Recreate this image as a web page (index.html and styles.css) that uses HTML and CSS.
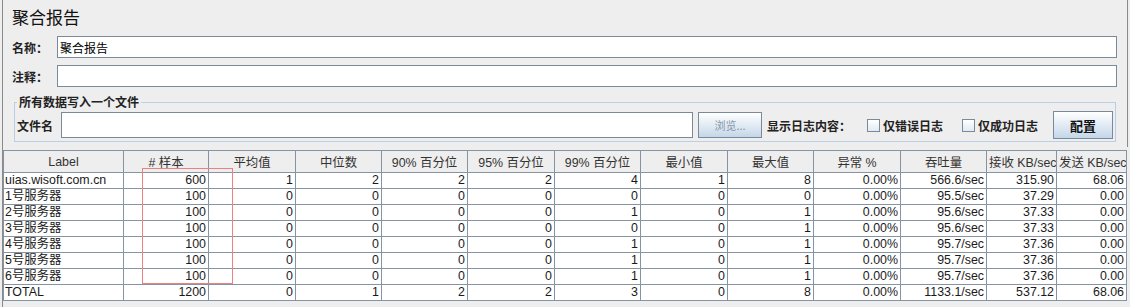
FILE: index.html
```html
<!DOCTYPE html>
<html lang="zh-CN">

<head>
    <meta charset="UTF-8">
    <title>聚合报告</title>
    <link rel="stylesheet" href="styles.css">
</head>

<body>
    <div class="frame">
        <div class="top">
            <h1 class="title">聚合报告</h1>
            <div class="field"><label>名称：</label><input type="text" value="聚合报告"></div>
            <div class="field"><label>注释：</label><input type="text"></div>
            <fieldset class="filebox">
                <legend>所有数据写入一个文件</legend>
                <div class="filerow">
                    <label class="fname">文件名</label>
                    <input type="text" class="finput">
                    <button type="button" class="btn browse">浏览...</button>
                    <span class="loglabel">显示日志内容：</span>
                    <span class="check"></span><span class="chtext">仅错误日志</span>
                    <span class="check check2"></span><span class="chtext">仅成功日志</span>
                    <button type="button" class="btn conf">配置</button>
                </div>
            </fieldset>
        </div>
        <div class="grid">
            <table cellspacing="0">
                <colgroup>
                    <col style="width:120px"><col style="width:85px"><col style="width:87px"><col style="width:86px">
                    <col style="width:86px"><col style="width:87px"><col style="width:86px"><col style="width:87px">
                    <col style="width:86px"><col style="width:87px"><col style="width:86px"><col style="width:70px">
                    <col style="width:70px">
                </colgroup>
                <thead>
                    <tr>
                        <th>Label</th>
                        <th># 样本</th>
                        <th>平均值</th>
                        <th>中位数</th>
                        <th>90% 百分位</th>
                        <th>95% 百分位</th>
                        <th>99% 百分位</th>
                        <th>最小值</th>
                        <th>最大值</th>
                        <th>异常 %</th>
                        <th>吞吐量</th>
                        <th>接收 KB/sec</th>
                        <th>发送 KB/sec</th>
                    </tr>
                </thead>
                <tbody></tbody>
            </table>
            <div class="mark"></div>
        </div>
    </div>
    <script>
        // 表格数据
        var rows = [
            ["uias.wisoft.com.cn", 600, 1, 2, 2, 2, 4, 1, 8, "0.00%", "566.6/sec", "315.90", "68.06"],
            ["1号服务器", 100, 0, 0, 0, 0, 0, 0, 0, "0.00%", "95.5/sec", "37.29", "0.00"],
            ["2号服务器", 100, 0, 0, 0, 0, 1, 0, 1, "0.00%", "95.6/sec", "37.33", "0.00"],
            ["3号服务器", 100, 0, 0, 0, 0, 0, 0, 1, "0.00%", "95.6/sec", "37.33", "0.00"],
            ["4号服务器", 100, 0, 0, 0, 0, 1, 0, 1, "0.00%", "95.7/sec", "37.36", "0.00"],
            ["5号服务器", 100, 0, 0, 0, 0, 1, 0, 1, "0.00%", "95.7/sec", "37.36", "0.00"],
            ["6号服务器", 100, 0, 0, 0, 0, 1, 0, 1, "0.00%", "95.7/sec", "37.36", "0.00"],
            ["TOTAL", 1200, 0, 1, 2, 2, 3, 0, 8, "0.00%", "1133.1/sec", "537.12", "68.06"]
        ];
        var tbody = document.querySelector("tbody");
        for (let i = 0; i < rows.length; i++) {
            var html = "<tr>";
            for (let j = 0; j < rows[i].length; j++) {
                html += `<td>${rows[i][j]}</td>`;
            }
            tbody.innerHTML += html + "</tr>";
        }
    </script>
</body>

</html>
```

FILE: styles.css
```css
body{
    margin: 0;
    background-color: #eeeeee;
    font-family: "Liberation Sans", "Noto Sans CJK SC", sans-serif;
    font-size: 12px;
    color: #222;
}
.frame{
    margin-left: 2px;
    width: 1125px;
    height: 307px;
    border-left: 1px solid #8a8a8a;
}
.top{
    padding: 0 10px 5px 9px;
    border-right: 1px solid #8a8a8a;
}
.title{
    margin: 0;
    padding-top: 5px;
    height: 24px;
    line-height: 24px;
    font-size: 17px;
    font-weight: normal;
    font-family: "Noto Sans CJK SC", sans-serif;
    color: #111;
}
.field{
    display: flex;
    align-items: center;
    margin-top: 7px;
}
.field label{
    width: 45px;
    font-weight: bold;
    font-family: "Noto Sans CJK SC", sans-serif;
    color: #222;
}
input{
    outline: none;
    box-sizing: border-box;
    border: 1px solid #7a8a99;
    background: #fff;
    margin: 0;
    padding: 0 2px;
    font-family: "Noto Sans CJK SC", sans-serif;
    font-size: 12px;
    color: #000;
}
.field input{
    flex: 1;
    height: 22px;
}
.filebox{
    margin: 8px 1px 0 2px;
    padding: 0 0 2px 2px;
    border: 1px solid #b8cfe5;
}
.filebox legend{
    padding: 0 2px;
    line-height: 14px;
    font-weight: bold;
    font-family: "Noto Sans CJK SC", sans-serif;
}
.filerow{
    display: flex;
    align-items: center;
    height: 28px;
    margin-top: 2px;
}
.fname{
    width: 44px;
    font-weight: bold;
    font-family: "Noto Sans CJK SC", sans-serif;
}
.finput{
    width: 632px;
    height: 26px;
}
.btn{
    box-sizing: border-box;
    border: 1px solid #7a8a99;
    background: linear-gradient(#ffffff, #dce7f2 60%, #c4d6e8);
    padding: 0;
    font-family: "Noto Sans CJK SC", sans-serif;
}
.browse{
    margin-left: 5px;
    width: 64px;
    height: 26px;
    font-size: 11px;
    color: #8796a6;
}
.loglabel{
    margin-left: 5px;
    width: 100px;
    font-weight: bold;
    font-family: "Noto Sans CJK SC", sans-serif;
}
.check{
    box-sizing: border-box;
    width: 13px;
    height: 13px;
    border: 1px solid #7a8a99;
    background: linear-gradient(#ffffff, #e2eaf2);
}
.check2{
    margin-left: 19px;
}
.chtext{
    margin-left: 3px;
    font-weight: bold;
    font-family: "Noto Sans CJK SC", sans-serif;
}
.conf{
    margin-left: auto;
    margin-right: 2px;
    width: 60px;
    height: 28px;
    font-size: 13px;
    font-weight: bold;
    color: #111;
}
.grid{
    position: relative;
    margin-top: 3px;
}
table{
    table-layout: fixed;
    width: 1124px;
    border-left: 1px solid #8593a2;
    border-top: 1px solid #8593a2;
    background: #fff;
}
th,td{
    padding: 0 2px;
    border-right: 1px solid #8593a2;
    border-bottom: 1px solid #8593a2;
    white-space: nowrap;
    overflow: hidden;
    font-size: 12.4px;
    color: #222;
}
th{
    height: 21px;
    background: #eeeeee;
    font-weight: normal;
    text-align: center;
    color: #333;
}
td{
    height: 15px;
    line-height: 15px;
    text-align: right;
    color: #1a1a1a;
}
td:first-child{
    text-align: left;
    padding-left: 1px;
}
.mark{
    position: absolute;
    left: 139px;
    top: 18px;
    width: 89px;
    height: 114px;
    border: 1px solid #ee8080;
}
```
